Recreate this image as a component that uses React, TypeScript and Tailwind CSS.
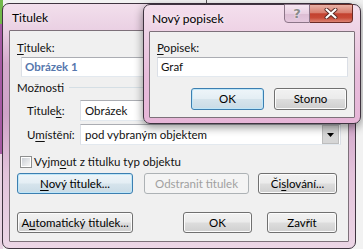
import React from "react";

const font = { fontFamily: '"Lato", "Noto Sans", sans-serif' };

function U({ children }: { children: React.ReactNode }) {
  return <span className="underline underline-offset-[2px] decoration-[1px]">{children}</span>;
}

const btnNormal =
  "h-full flex items-center justify-center rounded-[3px] border border-[#707070] bg-[linear-gradient(to_bottom,#f2f2f2_0%,#ebebeb_48%,#dddddd_52%,#cfcfcf_100%)] shadow-[inset_0_0_0_1px_#fcfcfc] text-black";
const btnDefault =
  "h-full flex items-center justify-center rounded-[3px] border border-[#3c7fb1] bg-[linear-gradient(to_bottom,#eef5f9_0%,#e4eef4_48%,#d6e4ec_52%,#c9dbe6_100%)] shadow-[inset_0_0_0_1px_#bfe6f8] text-black";
const btnDisabled =
  "h-full flex items-center justify-center rounded-[3px] border border-[#adb2b5] bg-[#f4f4f4] text-[#a0a0a0]";
const input =
  "bg-white border border-[#abadb3] border-l-[#dbdfe6] border-r-[#dbdfe6] border-b-[#e3e9ef] flex items-center";

function DropArrow() {
  return (
    <div className="ml-auto mr-[1px] w-[17px] h-[19px] bg-[#d6d6d6] border border-[#bdbdbd] flex items-center justify-center">
      <svg width="7" height="4" viewBox="0 0 7 4">
        <path d="M0 0 L7 0 L3.5 4 Z" fill="#000" />
      </svg>
    </div>
  );
}

export default function App() {
  return (
    <div
      className="relative w-[363px] h-[249px] overflow-hidden bg-[#f2f2f2] text-[11.5px] text-[#111]"
      style={font}
    >
      {/* desktop strip at left */}
      <div className="absolute left-0 top-0 w-[3px] h-[24px] bg-[#72b84a]" />
      <div className="absolute left-0 top-[24px] w-[3px] h-[130px] bg-[#a65aa3]" />
      <div className="absolute left-0 top-[154px] w-[3px] h-[95px] bg-[#e9d3e3]" />
      <div className="absolute left-[206px] top-0 w-px h-[4px] bg-[#555]" />

      {/* back window: Titulek */}
      <div className="absolute left-[2px] top-[3px] w-[354px] h-[246px] rounded-[7px] border border-[#3f3440] bg-[linear-gradient(to_bottom,#f2dfec_0px,#ead0e3_26px,#d4a9cc_60px,#cfa3c8_110px,#e3c3db_170px,#ecd6e6_246px)] flex flex-col">
        <div className="h-[26px] flex items-start">
          <span className="pl-[9px] mt-[6px] text-[12px] leading-[15px] text-black [text-shadow:0_0_6px_#fff]">
            Titulek
          </span>
        </div>
        <div className="mx-[6px] mb-[6px] flex-1 border border-[#7d707a] bg-[#f0f0f0] rounded-[1px] flex flex-col pl-[7px] pt-[9px]">
          <div className="h-[16px] leading-[16px]">
            <U>T</U>itulek:
          </div>
          <div className={`${input} ml-[4px] mt-[1px] h-[20px] w-[320px] pl-[3px] font-bold text-[#5677ad]`}>
            Obrázek 1
          </div>
          <div className="mt-[3px] h-[15px] flex items-center w-[324px]">
            <span>Možnosti</span>
            <div className="ml-[5px] flex-1 h-px bg-[#d5dfe5]" />
          </div>
          <div className="mt-[5px] h-[21px] flex items-center">
            <div className="w-[63px] pl-[10px]">
              Titule<U>k</U>:
            </div>
            <div className={`${input} h-full w-[261px] pl-[4px]`}>
              Obrázek
              <DropArrow />
            </div>
          </div>
          <div className="mt-[3px] h-[21px] flex items-center">
            <div className="w-[63px] pl-[10px]">
              U<U>m</U>ístění:
            </div>
            <div className={`${input} h-full w-[261px] pl-[4px]`}>
              pod vybraným objektem
              <DropArrow />
            </div>
          </div>
          <div className="mt-[10px] h-[13px] flex items-center">
            <div className="ml-[3px] w-[12px] h-[12px] border border-[#8e8f8f] bg-white p-px">
              <div className="w-full h-full bg-[linear-gradient(135deg,#cbcfd5,#f6f6f6)]" />
            </div>
            <span className="ml-[2px]">
              Vyjm<U>o</U>ut z titulku typ objektu
            </span>
          </div>
          <div className="mt-[5px] h-[21px] flex">
            <div className={`${btnDefault} w-[116px]`}>
              <span>
                <U>N</U>ový titulek...
              </span>
            </div>
            <div className={`${btnDisabled} w-[105px] ml-[11px]`}>Odstranit titulek</div>
            <div className={`${btnNormal} w-[79px] ml-[9px]`}>
              <span>
                Či<U>s</U>lování...
              </span>
            </div>
          </div>
          <div className="mt-[18px] h-[21px] flex">
            <div className={`${btnNormal} w-[116px]`}>
              <span>
                A<U>u</U>tomatický titulek...
              </span>
            </div>
            <div className={`${btnNormal} w-[69px] ml-[50px]`}>OK</div>
            <div className={`${btnNormal} w-[70px] ml-[15px]`}>Zavřít</div>
          </div>
        </div>
      </div>

      {/* front window: Nový popisek */}
      <div className="absolute left-[143px] top-[4px] w-[218px] h-[120px] rounded-[7px] border border-[#3f3440] bg-[linear-gradient(to_bottom,#f4dfed_0px,#eed2e5_26px,#e8bcdb_70px,#e6b5d7_120px)] shadow-[0_3px_10px_rgba(0,0,0,0.45)] flex flex-col">
        <div className="h-[26px] flex items-start justify-between">
          <span className="pl-[8px] mt-[6px] text-[12px] leading-[15px] text-black [text-shadow:0_0_6px_#fff]">
            Nový popisek
          </span>
          <div className="flex mr-[7px] -mt-px">
            <div className="w-[26px] h-[19px] rounded-bl-[4px] border border-[#8c7588] bg-[linear-gradient(to_bottom,#f6e6f1_0%,#e9d0e2_50%,#dcbdd3_52%,#e6c9de_100%)] flex items-center justify-center">
              <span className="text-[13px] font-bold text-[#8a8a8a] leading-none [text-shadow:0_0_2px_#fff]" style={{ fontFamily: '"DejaVu Sans", sans-serif' }}>
                ?
              </span>
            </div>
            <div className="w-[43px] h-[19px] rounded-br-[4px] border border-l-0 border-[#6b2b26] bg-[linear-gradient(to_bottom,#eab1a6_0%,#d98070_45%,#c3412f_52%,#c84a37_75%,#dd8474_100%)] flex items-center justify-center">
              <svg width="14" height="11" viewBox="0 0 14 11">
                <path d="M2.5 1.5 L11.5 9.5 M11.5 1.5 L2.5 9.5" stroke="#5a2a26" strokeWidth="4" strokeLinecap="round" />
                <path d="M2.5 1.5 L11.5 9.5 M11.5 1.5 L2.5 9.5" stroke="#fff" strokeWidth="2.2" strokeLinecap="round" />
              </svg>
            </div>
          </div>
        </div>
        <div className="mx-[5px] mb-[5px] flex-1 border border-[#7d707a] bg-[#f0f0f0] rounded-[1px] flex flex-col pl-[7px] pt-[8px]">
          <div className="h-[16px] leading-[16px]">
            <U>P</U>opisek:
          </div>
          <div className={`${input} mt-[1px] h-[20px] w-[191px] pl-[3px]`}>Graf</div>
          <div className="mt-[11px] h-[22px] flex">
            <div className={`${btnDefault} w-[73px] ml-[34px]`}>OK</div>
            <div className={`${btnNormal} w-[73px] ml-[10px]`}>Storno</div>
          </div>
        </div>
      </div>
    </div>
  );
}
